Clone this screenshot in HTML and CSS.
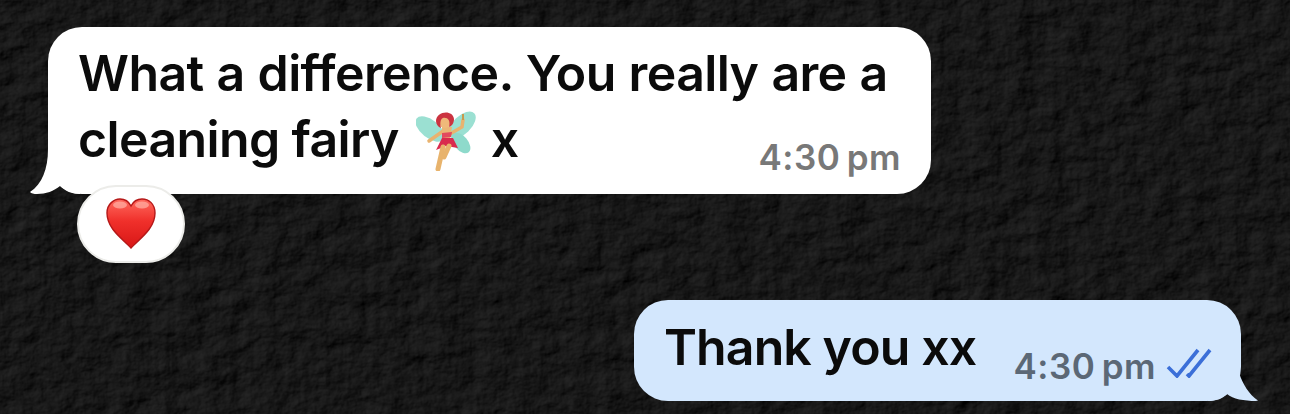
FILE: index.html
```html
<!DOCTYPE html>
<html lang="en">
<head>
<meta charset="utf-8">
<title>Chat</title>
<link rel="stylesheet" href="styles.css">
</head>
<body>
<svg class="texture" width="1290" height="414" aria-hidden="true">
  <filter id="rock" x="0" y="0" width="100%" height="100%" color-interpolation-filters="sRGB">
    <feTurbulence type="fractalNoise" baseFrequency="0.035 0.05" numOctaves="6" seed="23" result="n"/>
    <feDiffuseLighting in="n" surfaceScale="2" diffuseConstant="1" lighting-color="#ffffff">
      <feDistantLight azimuth="215" elevation="55"/>
    </feDiffuseLighting>
    <feGaussianBlur stdDeviation="0.7"/>
    <feColorMatrix type="matrix" values="0.42 0 0 0 -0.25  0.42 0 0 0 -0.25  0.42 0 0 0 -0.25  0 0 0 0 1"/>
  </filter>
  <rect width="1290" height="414" filter="url(#rock)"/>
</svg>
<main class="chat">
  <div class="incoming">
    <div class="bubble bubble-in">
      <svg class="tail tail-in" width="50" height="46" viewBox="0 0 50 46" aria-hidden="true">
        <path d="M18 0C18 20 12 35 0 43Q2 45 7 45C16 45 24 42 30 37C35 42 42 45 50 45V0Z" fill="#fff"/>
      </svg>
      <p class="line line-wide">What a difference. You really are a</p>
      <div class="last-line">
        <p class="line">cleaning fairy
          <svg class="fairy" width="60" height="62" viewBox="0 0 60 62" aria-hidden="true">
            <ellipse cx="14" cy="20" rx="17" ry="9" transform="rotate(38 14 20)" fill="#9be0d2"/>
            <ellipse cx="46" cy="16" rx="17" ry="9" transform="rotate(-44 46 16)" fill="#9be0d2"/>
            <ellipse cx="45" cy="34" rx="12" ry="7" transform="rotate(50 45 34)" fill="#8edacb"/>
            <path d="M30 20L13 32" stroke="#e9b36f" stroke-width="3.5" stroke-linecap="round"/>
            <path d="M32 26L46 18L47 11" stroke="#e9b36f" stroke-width="3.5" fill="none" stroke-linecap="round"/>
            <path d="M47 11V5" stroke="#c89a4e" stroke-width="2"/>
            <path d="M26 18L36 18L34 30L26 30Z" fill="#eab676"/>
            <path d="M26 24L36 23L35 28L26 29Z" fill="#e24a5e"/>
            <path d="M20 41L26 29L37 29L42 39L30 37Z" fill="#d92b4d"/>
            <path d="M27 38L22 60" stroke="#e8b36c" stroke-width="5" stroke-linecap="round"/>
            <path d="M33 37L28 48" stroke="#e8b36c" stroke-width="5" stroke-linecap="round"/>
            <circle cx="29" cy="13" r="6" fill="#efb97a"/>
            <path d="M20 12C20 2 37 0 38 10C38 14 36 17 33 18C35 11 31 8 27 9C24 10 24 15 25 19C22 18 20 15 20 12Z" fill="#cb3340"/>
          </svg>
          x</p>
        <span class="time time-in">4:30&#8201;pm</span>
      </div>
    </div>
    <div class="reaction">
      <svg width="52" height="52" viewBox="0 0 52 52" aria-hidden="true">
        <defs>
          <linearGradient id="heart" x1="0" y1="0" x2="0" y2="1">
            <stop offset="0" stop-color="#ff6a5e"/>
            <stop offset="0.45" stop-color="#f0302b"/>
            <stop offset="1" stop-color="#d81616"/>
          </linearGradient>
        </defs>
        <path d="M26 50C18 41 2 31 2 15C2 6 9 1 15 1C20 1 24 4 26 8C28 4 32 1 37 1C44 1 50 6 50 15C50 31 34 41 26 50Z" fill="url(#heart)" stroke="#b51818" stroke-width="1.4"/>
        <ellipse cx="15" cy="7" rx="7" ry="3.5" fill="#ffb3a8" opacity="0.7"/>
        <ellipse cx="37" cy="7" rx="7" ry="3.5" fill="#ffb3a8" opacity="0.7"/>
      </svg>
    </div>
  </div>
  <div class="bubble bubble-out">
    <svg class="tail tail-out" width="50" height="70" viewBox="0 0 50 70" aria-hidden="true">
      <path d="M0 0H25C26 30 32 56 50 68.5L48 69C36 69 25 67 19 62C14 67 8 69 0 69Z" fill="#d3e7fd"/>
    </svg>
    <p class="line line-tight">Thank you xx</p>
    <div class="meta">
      <span class="time time-out">4:30&#8201;pm</span>
      <svg class="ticks" width="46" height="30" viewBox="0 0 46 30" aria-hidden="true">
        <path d="M2 19L11 28L32 2M21 26L23 28L44 2" fill="none" stroke="#3b6fd8" stroke-width="3.6"/>
      </svg>
    </div>
  </div>
</main>
</body>
</html>
```
FILE: styles.css
```css
* { box-sizing: border-box; }
html, body { margin: 0; height: 414px; overflow: hidden; background: #1b1b1b; }
body { position: relative; font-family: Inter, "Liberation Sans", sans-serif; color: #0b0b0b; font-variant-ligatures: none; }
.texture { position: absolute; inset: 0; display: block; }
.chat {
  position: relative;
  display: flex;
  flex-direction: column;
  width: 1290px;
  height: 414px;
  padding: 27px 49px 13px 48px;
}
.incoming { display: flex; flex-direction: column; align-items: flex-start; }
.bubble { position: relative; background: #fff; }
.line { margin: 0; font-size: 50px; line-height: 67px; font-weight: 600; letter-spacing: -0.62px; white-space: nowrap; }
.line-wide { word-spacing: 1px; }
.line-tight { letter-spacing: -0.9px; }
.bubble-in {
  width: 883px;
  height: 167px;
  border-radius: 34px;
  padding: 13px 30px 0 30px;
}
.last-line { display: flex; justify-content: space-between; align-items: flex-end; margin-top: -1px; }
.fairy { display: inline-block; vertical-align: -14px; margin: 0 3px 0 5px; }
.time { font-size: 35px; font-weight: 600; line-height: 42px; white-space: nowrap; letter-spacing: 0.5px; }
.time-in { color: #787878; margin-bottom: -5px; }
.time-out { color: #5b6876; }
.tail { position: absolute; display: block; }
.tail-in { left: -18px; bottom: -1px; }
.tail-out { right: -17px; bottom: -1px; }
.reaction {
  display: flex;
  align-items: center;
  justify-content: center;
  width: 108px;
  height: 78px;
  margin: -9px 0 0 29px;
  border-radius: 39px;
  background: #fff;
  border: 2px solid #ecece9;
  position: relative;
}
.bubble-out {
  align-self: flex-end;
  display: flex;
  align-items: flex-end;
  justify-content: space-between;
  width: 607px;
  height: 101px;
  margin-top: 37px;
  border-radius: 34px;
  background: #d3e7fd;
  padding: 14px 29px 14px 30px;
}
.bubble-out .line { align-self: flex-start; }
.meta { display: flex; align-items: center; gap: 10px; position: relative; }
.ticks { display: block; margin-top: -6px; }
```
